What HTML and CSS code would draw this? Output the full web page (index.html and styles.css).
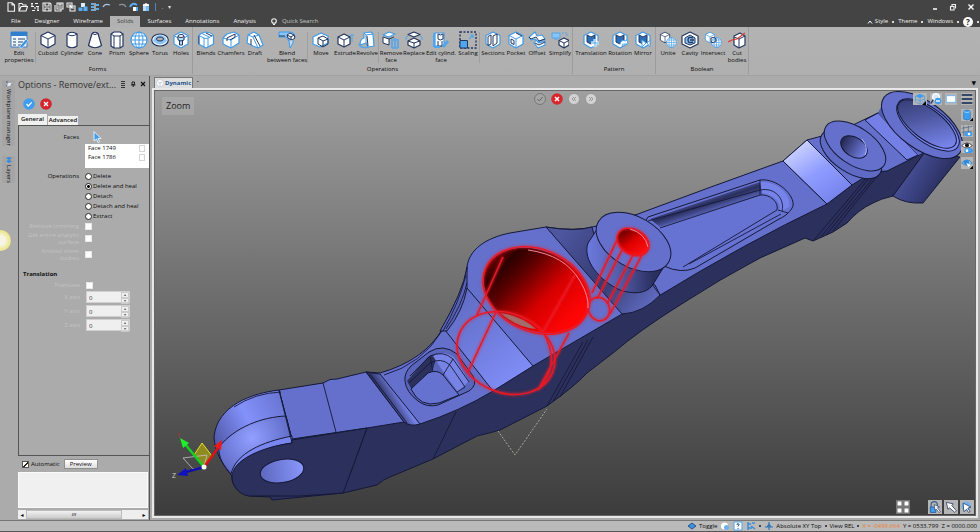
FILE: index.html
```html
<!DOCTYPE html>
<html lang="en">
<head>
<meta charset="utf-8">
<title>Solids - Remove/extract faces</title>
<link rel="stylesheet" href="styles.css">
</head>
<body>
<svg class="sprite" aria-hidden="true">
  <symbol id="cube" viewBox="0 0 18 18"><path class="w" d="M9 1 16 4.500V13L9 17 2 13V4.500Z"/><path class="l" d="M2 4.500 9 8 16 4.500M9 8V17"/></symbol>
  <symbol id="globe" viewBox="0 0 18 18"><circle class="w" cx="9" cy="9" r="8"/><ellipse class="l" cx="9" cy="9" rx="4" ry="8"/><path class="l" d="M1 9H17M2 5H16M2 13H16M9 1V17"/></symbol>
  <symbol id="pin" viewBox="0 0 18 18"><path d="M4 4 14 9 10 10.500 13 15 11 16 8.500 12 5 15Z" fill="#fff" stroke="#23365f"/></symbol>
</svg>

<header class="titlebar">
  <nav class="quick" aria-label="Quick access">
    <button aria-label="New"><svg viewBox="0 0 10 10"><path d="M2 .700H6L8.500 3V9.300H2ZM6 .700V3H8.500" class="q"/></svg></button>
    <button aria-label="Open"><svg viewBox="0 0 10 10"><path d="M1 9V1.500H4L5 3H8V4.500M1 9 3 4.500H9.500L8 9Z" class="q"/></svg></button>
    <button aria-label="Import"><svg viewBox="0 0 10 10"><path d="M1 1.500H3M5 1.500H8M1 4.500H4M6 4.500H9M2 8.500H5M7 8.500H9M2 2V4M8 5V8M5 5V7" class="q"/></svg></button>
    <button aria-label="Save"><svg viewBox="0 0 10 10"><path d="M1 1H8L9 2V9H1ZM3 1V4H7V1M3 9V6H7V9" class="q"/></svg></button>
    <button aria-label="Save all"><svg viewBox="0 0 10 10"><path d="M3 1H9V7H3ZM1 3V9H7V7M5 1V3H7V1M4 5H8" class="q"/></svg></button>
    <button aria-label="Export"><svg viewBox="0 0 10 10"><path d="M1 1H6V5H1ZM4 4H9V9H4ZM2 3H5M5 6H8" class="q"/></svg></button>
    <button aria-label="Assembly"><svg viewBox="0 0 10 10"><path d="M3 1H7V5H3Z" fill="#dbeeff"/><path d="M.500 5.500H4.500V9H.500ZM5.500 4.500H9.500V9H5.500Z" fill="#58adf3"/></svg></button>
    <button aria-label="Structure"><svg viewBox="0 0 10 10"><path d="M1 2H4M1 5H4M1 8H4" stroke="#58adf3" stroke-width="2"/><path d="M5 1V9" stroke="#fff"/><path d="M6 3H9M6 7H9" stroke="#58adf3" stroke-width="2"/></svg></button>
    <button aria-label="Undo"><svg viewBox="0 0 10 10"><path d="M1 5Q3 1 8 3" class="qb"/></svg></button>
    <button class="gap" aria-label="Redo"><svg viewBox="0 0 10 10"><path d="M2 3Q7 1 9 5" class="qd"/></svg></button>
    <button aria-label="Rotate view"><svg viewBox="0 0 10 10"><path d="M1 5Q3 0 8 3" stroke="#58adf3" stroke-width="2" fill="none"/><path d="M4 5H9V9H4Z" fill="#fff"/><path d="M7 5H9V9H7Z" fill="#58adf3"/></svg></button>
    <button aria-label="Shade"><svg viewBox="0 0 10 10"><path d="M2 2H8V9H2Z" fill="#b9dcfa"/><path d="M2 3 5 1 8 3V4H2Z" fill="#fff"/><path d="M5 4H8V9H5Z" fill="#7bbcf3"/></svg></button>
    <span class="bar"></span>
    <button class="tiny" aria-label="More">.</button>
    <button class="tiny" aria-label="Customize">▾</button>
  </nav>
  <div class="winbtns">
    <button aria-label="Minimize"><svg viewBox="0 0 8 8"><path d="M2 6H6" stroke="#fff" stroke-width="1.500"/></svg></button>
    <button aria-label="Restore"><svg viewBox="0 0 8 8"><path d="M1.500 3.500H5V7H1.500ZM3 3V1.500H6.500V5H6" class="q"/></svg></button>
    <button aria-label="Close"><svg viewBox="0 0 8 8"><path d="M1.500 1.500 6.500 6.500M6.500 1.500 1.500 6.500" stroke="#fff" stroke-width="1.400"/></svg></button>
  </div>
</header>

<nav class="tabs" aria-label="Ribbon tabs">
  <button>File</button><button>Designer</button><button>Wireframe</button><button class="on">Solids</button><button>Surfaces</button><button>Annotations</button><button>Analysis</button>
  <label class="search"><svg viewBox="0 0 8 8"><circle cx="4" cy="3" r="2.300" class="q"/><path d="M3 6.500H5" class="q"/></svg><input type="text" aria-label="Quick Search" placeholder="Quick Search"></label>
  <div class="right">
    <button><svg viewBox="0 0 6 6"><path d="M1 4.500 3 2 5 4.500" stroke="#fff" fill="none"/></svg> Style</button>
    <i class="dd"></i><button>Theme</button><i class="dd"></i><button>Windows</button><i class="dd"></i>
    <button class="help" aria-label="Help">?</button><i class="dd"></i>
  </div>
</nav>

<section class="ribbon" aria-label="Solids">
  <div class="group">
    <div class="tools">
      <button class="b32"><svg viewBox="0 0 18 18"><path d="M1 1H17V16H1Z" fill="#eef6fd" stroke="#3d7fbd"/><path d="M1 1H17V5H1Z" fill="#2f7fcf"/><path d="M3 8H6M3 11H6M3 14H6M8 8H15M8 11H13M8 14H11" stroke="#27406d" stroke-width="1.200"/><path d="M10 15 16 8 18 10 12 17 10 17Z" fill="#3b93e0" stroke="#fff" stroke-width=".500"/></svg>Edit<br>properties</button>
      <hr>
      <button class="b24"><svg class="n"><use href="#cube"/></svg>Cuboid</button>
      <button class="b24"><svg class="n" viewBox="0 0 18 18"><path class="w" d="M4 3V15Q9 18.500 14 15V3Q9-.500 4 3"/><path class="l" d="M4 3Q9 6.500 14 3"/></svg>Cylinder</button>
      <button class="b22"><svg class="n" viewBox="0 0 18 18"><path class="w" d="M6 2.500 2.500 14.500Q9 19 15.500 14.500L12 2.500Q9 0 6 2.500"/><path class="l" d="M6 2.500Q9 4.500 12 2.500"/></svg>Cone</button>
      <button class="b22"><svg class="n" viewBox="0 0 18 18"><path class="w" d="M3 3 6 1H12L15 3V15L12 17H6L3 15Z"/><path class="l" d="M3 3 6 5H12L15 3M6 5V17M12 5V17"/></svg>Prism</button>
      <button class="b22"><svg class="c"><use href="#globe"/></svg>Sphere</button>
      <button class="b20"><svg class="n" viewBox="0 0 18 18"><ellipse class="w" cx="9" cy="9" rx="8.300" ry="6"/><path d="M2 10Q9 17 16 10L14 6Q9 2 4 6Z" fill="#8ac4f5"/><ellipse cx="9" cy="8" rx="3.500" ry="2" fill="#b0b0b0" stroke="#23365f"/></svg>Torus</button>
      <button class="b22"><svg class="c" viewBox="0 0 18 18"><path class="w" d="M9 1 16 4.500V13L9 17 2 13V4.500Z"/><path class="l" d="M2 4.500 6 7M16 4.500 12 7"/><path d="M6 5V9Q9 11 12 9V5M7.500 10V14H10.500V10" fill="#b9dcfa" stroke="#23365f"/><ellipse cx="9" cy="5" rx="3" ry="1.500" fill="#fff" stroke="#23365f"/></svg>Holes</button>
    </div>
    <h2>Forms</h2>
  </div>
  <div class="group">
    <div class="tools">
      <button class="b26"><svg class="c" viewBox="0 0 18 18"><path class="w" d="M9 1Q16 2 16.500 5V13L9 17 1.500 13V5Q3 2 9 1Z"/><path class="l" d="M2 4.500 7 7Q9 8 11 7L16 4.500M7 7V16M11 7V16M5 2.500 12 6"/><path class="d" d="M2 5V13M9 2 15 5"/></svg>Blends</button>
      <button class="b24"><svg class="c" viewBox="0 0 18 18"><path class="w" d="M5 3 12 1 17 4V12L9 17 1 13V7Z"/><path class="l" d="M1 7 9 9 17 4M9 9V17"/><path class="d" d="M5 7 13 3M5 7V10M13 3V6L8 9"/></svg>Chamfers</button>
      <button class="b24"><svg class="c" viewBox="0 0 18 18"><path class="w" d="M2 4 8 1 13 4 17 14 12 17 7 15 1 12Z"/><path class="l" d="M2 4 7 6 13 4M7 6 12 17"/><path class="d" d="M5 8V14M8 4 14 15"/></svg>Draft</button>
      <button class="b40"><svg class="c" viewBox="0 0 18 18"><path d="M1 1H11Q17 1 17 6L11 7V10L8 6H1Z" fill="#8ac4f5" stroke="#419ae6"/><path class="n2" d="M9 4 12 2 16 4 17 7 14 9 10 7Z"/><path class="d" d="M9 4 13 6 16 4M13 6V9M1 5H7"/><path d="M11 10 12 17 15 12V9" fill="#b9dcfa" stroke="#419ae6"/></svg>Blend<br>between faces</button>
      <hr>
      <button class="b26"><svg class="c" viewBox="0 0 18 18"><path class="w" d="M1 6 9 2 16 5V12L8 16 1 13Z"/><path class="d" d="M6 7 11 5 16 8V13L11 16 6 13ZM6 7 11 10 16 8M11 10V16"/></svg>Move</button>
      <button class="b22"><svg class="n" viewBox="0 0 18 18"><path class="w" d="M8 3 14 6V13L8 16 2 13V6Z"/><path class="l" d="M2 6 8 9 14 6M8 9V16"/><path d="M16 3V11M14 5 16 3 18 5" stroke="#4fa6ee" fill="none"/></svg>Extrude</button>
      <button class="b22"><svg class="c" viewBox="0 0 18 18"><path class="w" d="M6 2 13 1 15 3 16 15 10 16 8 12 2 14Q2 8 6 7Z"/><path class="l" d="M6 2 8 4 15 3M8 4V12"/><path class="d" d="M9 5 10 15"/><path d="M1 13Q3 18 10 16" stroke="#4fa6ee" stroke-width="1.500" fill="none"/></svg>Revolve</button>
      <hr>
      <button class="b24"><svg class="c" viewBox="0 0 18 18"><path class="w" d="M1 4 7 1 13 3 7 6Z"/><path class="n2" d="M1 6 7 8V14L1 12ZM7 8 12 6"/><path d="M9 9H17M13 7V8M10 10V17M13 10V17M16 10V17M10 17H16" stroke="#4fa6ee" stroke-width="1.600"/></svg>Remove<br>face</button>
      <button class="b22"><svg class="n" viewBox="0 0 18 18"><path class="w" d="M3 3.500 9 1 15 3.500 9 6Z"/><path class="w" d="M3 10 9 7 15 10V14L9 17 3 14Z"/><path class="l" d="M3 10 9 12 15 10M9 12V17"/><path d="M1 9Q0 5 3 5M17 9Q18 5 15 5" stroke="#4fa6ee" fill="none"/></svg>Replace</button>
      <button class="b32"><svg class="c" viewBox="0 0 18 18"><path class="w" d="M3 2H12V15H3Z"/><path class="n2" d="M6 3Q9 5 11 3V8Q8 10 6 8ZM6 10V15H10V10"/><path d="M10 15 15 9 17 11 12 17Z" fill="#4fa6ee"/><path d="M2 2V16M2 16H8" stroke="#4fa6ee" stroke-width="2"/></svg>Edit cylind.<br>face</button>
      <button class="b22"><svg viewBox="0 0 18 18"><path d="M1 1H17V17H1Z" fill="none" stroke="#23365f" stroke-width="1.400" stroke-dasharray="2 1.500"/><path d="M1 9.500H8.500V17H1Z" fill="#4fa6ee" stroke="#23365f"/><path d="M10 8 14 4M11 4H14V7" stroke="#4fa6ee" stroke-width="1.200" fill="none"/></svg>Scaling</button>
      <hr>
      <button class="b26"><svg class="c" viewBox="0 0 18 18"><path class="w" d="M9 1 16 4.500V13L9 17 2 13V4.500Z"/><path class="d" d="M4 5.500 7 4V13L4 14.500ZM9 5 13 3V12L9 15Z"/></svg>Sections</button>
      <button class="b20"><svg class="c" viewBox="0 0 18 18"><use href="#cube" width="18" height="18"/><path class="d" d="M4 8 7 9.500V13.500L4 12ZM9 2 15 5"/></svg>Pocket</button>
      <button class="b22"><svg class="c" viewBox="0 0 18 18"><path class="w" d="M1 6 7 1 9 5 14 4 17 8 10 11 7 8 3 9Z"/><path class="w" d="M6 12 8 9 11 12 17 10V14L10 17Z"/><path class="d" d="M1 6 3 8 8 6 11 10 17 8M7 12 11 14 17 11"/></svg>Offset</button>
      <button class="b24"><svg class="n" viewBox="0 0 18 18"><path d="M1 2H9V7H1ZM3 8H7" fill="#8ac4f5" stroke="#4fa6ee"/><path d="M11 2H16V6" stroke="#4fa6ee" stroke-dasharray="2 1" fill="none"/><path class="w" d="M13 7 18 9.500V14L13 17 8 14V9.500Z"/><path class="l" d="M8 9.500 13 12 18 9.500M13 12V17"/></svg>Simplify</button>
    </div>
    <h2>Operations</h2>
  </div>
  <div class="group">
    <div class="tools">
      <button class="b36"><svg class="c" viewBox="0 0 18 18"><path class="w" d="M9 1 16 4.500V13L9 17 2 13V4.500Z"/><path d="M5 4 9 6 13 4V11L9 13 5 11Z" fill="#2d6fb8" stroke="#23365f"/><path d="M13 8V16M9 12H17" stroke="#fff" stroke-width="3"/><path d="M13 8V16M9 12H17" stroke="#4fa6ee" stroke-width="1"/></svg>Translation</button>
      <button class="b22"><svg class="c" viewBox="0 0 18 18"><path class="w" d="M9 1 16 4.500V13L9 17 2 13V4.500Z"/><path d="M5 4 9 6 13 4V11L9 13 5 11Z" fill="#2d6fb8" stroke="#23365f"/><path d="M9 13Q10 8 15 10L16 8 17 13 13 13Q11 12 11 16" fill="#fff" stroke="#4fa6ee"/></svg>Rotation</button>
      <button class="b24"><svg class="c" viewBox="0 0 18 18"><path class="w" d="M9 1 16 4.500V13L9 17 2 13V4.500Z"/><path d="M5 4 9 6 13 4V11L9 13 5 11Z" fill="#2d6fb8" stroke="#23365f"/><path d="M8 9V16L12 12ZM16 9V16L13 12Z" fill="#fff" stroke="#4fa6ee"/></svg>Mirror</button>
    </div>
    <h2>Pattern</h2>
  </div>
  <div class="group">
    <div class="tools">
      <button class="b24"><svg class="n" viewBox="0 0 18 18"><use href="#cube" width="12" height="13"/><use class="c" href="#globe" x="7" y="6" width="11" height="11"/></svg>Unite</button>
      <button class="b20"><svg class="n" viewBox="0 0 18 18"><path class="w" d="M9 1 17 5V13L9 17 1 13V5Z"/><path d="M9 4 14 7V12L9 14 4 12V7Z" fill="#8ac4f5" stroke="#23365f"/><path d="M12 7Q7 5 7 9T12 11M9 9H13" stroke="#23365f" stroke-width="1.400" fill="none"/></svg>Cavity</button>
      <button class="b26"><svg class="c" viewBox="0 0 18 18"><use href="#cube" width="12" height="13"/><use href="#globe" x="7" y="6" width="11" height="11"/><path class="d" d="M7 7Q12 5 12 10Q9 13 7 11Z"/></svg>Intersect</button>
      <button class="b22"><svg class="n" viewBox="0 0 18 18"><path class="w" d="M6 5 12 2 17 5V14L11 17 6 14Z"/><path class="l" d="M6 6 11 8 17 5M11 8V17"/><path d="M0 11 4 9 9 8 17 2" stroke="#e0352f" stroke-width="1.200" fill="none"/></svg>Cut<br>bodies</button>
    </div>
    <h2>Boolean</h2>
  </div>
</section>

<main class="work">
  <aside class="rail">
    <button><svg viewBox="0 0 8 8"><path d="M1 2H3M1 6 4 4 7 4" stroke="#46618c" fill="none"/><path d="M3 3H7L5 6H2Z" fill="#dfe9f3"/></svg><span>Workplane manager</span></button>
    <button><svg viewBox="0 0 8 8"><path d="M1 2 4 1 7 2 4 4ZM1 5 4 4 7 5 4 7Z" fill="#2f8be0"/></svg><span>Layers</span></button>
    <i class="ball"></i>
  </aside>

  <aside class="panel">
    <div class="phead"><h1>Options - Remove/ext...</h1>
      <button aria-label="Menu"><svg viewBox="0 0 8 8"><path d="M2 1.500H6M2 3.500H6M2 5.500H6M2 7.500H6" stroke="#333"/></svg></button>
      <button aria-label="Pin"><svg viewBox="0 0 8 8"><path d="M3 2H5.500V4.500H3ZM2 5H6.500M4.200 5V7" stroke="#222" fill="none"/></svg></button>
      <button aria-label="Close"><svg viewBox="0 0 8 8"><path d="M2 2 6 6M6 2 2 6" stroke="#111" stroke-width="1.200"/></svg></button>
    </div>
    <div class="okrow">
      <button aria-label="Apply"><svg viewBox="0 0 12 12"><circle cx="6" cy="6" r="5.800" fill="#3f9df0"/><path d="M3.500 6 5.300 8 8.700 4.300" stroke="#fff" stroke-width="1.200" fill="none"/></svg></button>
      <button aria-label="Cancel"><svg viewBox="0 0 12 12"><circle cx="6" cy="6" r="5.800" fill="#d3252b"/><path d="M4 4 8 8M8 4 4 8" stroke="#fff" stroke-width="1.400"/></svg></button>
    </div>
    <div class="ptabs"><button class="on">General</button><button>Advanced</button></div>
    <form class="pbody">
      <div class="row faces"><span class="lab">Faces</span><svg class="cur" viewBox="0 0 10 12"><path d="M2 .500V10L4.500 8 6 11.500 7.500 10.800 6 7.500H9Z" fill="#3f9df0" stroke="#fff" stroke-width=".800"/></svg></div>
      <ul class="list"><li>Face 1749<i></i></li><li>Face 1786<i></i></li></ul>
      <div class="row ops"><span class="lab">Operations</span>
        <div class="radios">
          <label><input type="radio" name="op">Delete</label>
          <label><input type="radio" name="op" checked>Delete and heal</label>
          <label><input type="radio" name="op">Detach</label>
          <label><input type="radio" name="op">Detach and heal</label>
          <label><input type="radio" name="op">Extract</label>
        </div>
      </div>
      <div class="row dis"><label class="lab" for="c1">Remove trimming</label><input id="c1" type="checkbox" disabled></div>
      <div class="row dis two"><label class="lab" for="c2">Get entire analytic<br>surface</label><input id="c2" type="checkbox" disabled></div>
      <div class="row dis two"><label class="lab" for="c3">Knitted sheet<br>bodies</label><input id="c3" type="checkbox" disabled></div>
      <h3>Translation</h3>
      <div class="row dis tr"><label class="lab" for="c4">Translate</label><input id="c4" type="checkbox" disabled></div>
      <div class="row dis ax"><label class="lab" for="x">X axis</label><span class="spin"><input id="x" type="text" value="0" disabled><i>▴</i><i>▾</i></span></div>
      <div class="row dis ax"><label class="lab" for="y">Y axis</label><span class="spin"><input id="y" type="text" value="0" disabled><i>▴</i><i>▾</i></span></div>
      <div class="row dis ax"><label class="lab" for="z">Z axis</label><span class="spin"><input id="z" type="text" value="0" disabled><i>▴</i><i>▾</i></span></div>
    </form>
    <div class="auto"><label><input type="checkbox" checked>Automatic</label><button>Preview</button></div>
    <div class="msg"></div>
    <div class="scroll"><span>◂</span><i>ııı</i><b></b><span>▸</span></div>
  </aside>

  <section class="doc">
    <div class="dtabs"><button><svg viewBox="0 0 8 8"><circle cx="4" cy="4" r="3.500" fill="#fff" stroke="#aab6c6" stroke-width=".500"/><path d="M2 3 4 4 6 3M4 4V6.500" stroke="#90a4be" stroke-width=".600" fill="none"/></svg>Dynamic</button><span>▪</span><em>▼</em></div>
    <div class="frame">
      <svg class="model" viewBox="154 90 822 426" preserveAspectRatio="xMidYMid slice" role="img" aria-label="3D part with two highlighted faces">
        <defs>
          <linearGradient id="gLobe" x1="214" y1="440" x2="292" y2="400" gradientUnits="userSpaceOnUse"><stop offset="0" stop-color="#5059a8"/><stop offset=".450" stop-color="#8391fb"/><stop offset="1" stop-color="#6370ca"/></linearGradient>
          <radialGradient id="gLobe2" cx="252" cy="438" r="42" gradientUnits="userSpaceOnUse"><stop offset="0" stop-color="#929fff"/><stop offset="1" stop-color="#5d69c4"/></radialGradient>
          <linearGradient id="gPatch" x1="800" y1="142" x2="838" y2="200" gradientUnits="userSpaceOnUse"><stop offset="0" stop-color="#cdd3ff"/><stop offset=".500" stop-color="#8f9cff"/><stop offset="1" stop-color="#7582ec"/></linearGradient>
          <linearGradient id="gSlope" x1="450" y1="300" x2="520" y2="385" gradientUnits="userSpaceOnUse"><stop offset="0" stop-color="#5f6bc2"/><stop offset="1" stop-color="#828ffa"/></linearGradient>
          <linearGradient id="gBoss" x1="587" y1="0" x2="670" y2="0" gradientUnits="userSpaceOnUse"><stop offset="0" stop-color="#6d7ae0"/><stop offset=".350" stop-color="#5560b0"/><stop offset=".800" stop-color="#2b3060"/><stop offset="1" stop-color="#272b56"/></linearGradient>
          <linearGradient id="gFil" x1="560" y1="235" x2="650" y2="305" gradientUnits="userSpaceOnUse"><stop offset="0" stop-color="#4d569f"/><stop offset=".550" stop-color="#343a70"/><stop offset="1" stop-color="#5e69bd"/></linearGradient>
          <linearGradient id="gRing" x1="900" y1="105" x2="950" y2="145" gradientUnits="userSpaceOnUse"><stop offset="0" stop-color="#343a72"/><stop offset=".400" stop-color="#4d579f"/><stop offset="1" stop-color="#7d8af5"/></linearGradient>
          <linearGradient id="gCyl" x1="902" y1="165" x2="948" y2="192" gradientUnits="userSpaceOnUse"><stop offset="0" stop-color="#4d569e"/><stop offset=".450" stop-color="#3a4180"/><stop offset="1" stop-color="#242850"/></linearGradient>
          <linearGradient id="gHole" x1="841" y1="0" x2="868" y2="0" gradientUnits="userSpaceOnUse"><stop offset="0" stop-color="#252a54"/><stop offset="1" stop-color="#7582e8"/></linearGradient>
          <linearGradient id="gEye" x1="260" y1="0" x2="304" y2="0" gradientUnits="userSpaceOnUse"><stop offset="0" stop-color="#5c67bd"/><stop offset="1" stop-color="#8a97fd"/></linearGradient>
          <linearGradient id="gRed" x1="488" y1="270" x2="580" y2="305" gradientUnits="userSpaceOnUse"><stop offset="0" stop-color="#6a0000"/><stop offset=".120" stop-color="#2c0000"/><stop offset=".300" stop-color="#5a0000"/><stop offset=".650" stop-color="#d60000"/><stop offset="1" stop-color="#ff0505"/></linearGradient>
          <linearGradient id="gRedS" x1="618" y1="235" x2="648" y2="248" gradientUnits="userSpaceOnUse"><stop offset="0" stop-color="#5a0000"/><stop offset=".500" stop-color="#e00000"/><stop offset="1" stop-color="#ff1010"/></linearGradient>
          <linearGradient id="gGroove" x1="385" y1="402" x2="398" y2="394" gradientUnits="userSpaceOnUse"><stop offset="0" stop-color="#262a54"/><stop offset="1" stop-color="#7481e6"/></linearGradient>
          <linearGradient id="gWall" x1="700" y1="196" x2="706" y2="214" gradientUnits="userSpaceOnUse"><stop offset="0" stop-color="#5c68c0"/><stop offset=".500" stop-color="#2a2e5c"/><stop offset="1" stop-color="#5c68c0"/></linearGradient>
          <filter id="soft" x="-20%" y="-20%" width="140%" height="140%"><feGaussianBlur stdDeviation="1"/></filter>
        </defs>

        <!-- side faces -->
        <path class="e" fill="#2c305c" d="M232 477C231 485 240 495 250 496L270 497 272 500 343 493 377 485Q384 479 390 477L433 459 477 436Q490 433 500 430L547 406Q575 386 587 373L613 353Q640 330 680 305 720 279 760 258L805 238 813 241 833 232 847 223Q858 210 873 203 880 199 893 196L925 152 887 160 827 190 660 280 533 350 412 410 292 430Z"/>
        <path class="e" fill="url(#gCyl)" d="M925 152 893 196Q905 204 923 203L960 157Z"/>
        <!-- upper faces -->
        <path class="e" fill="#6470cb" d="M279 390 323 383Q330 378 337 379L366 372 380 373Q425 360 443 328C453 305 467 285 467 267 469 250 485 238 510 233L546 227Q575 232 597 226L638 214Q710 187 783 161L807 140 822 136 853 125 882 111 925 152 887 171 873 172 852 185 827 204Q745 243 657 297 640 312 622 314L533 366 493 391Q460 411 420 424L404 422 367 428 292 439Z"/>
        <path d="M814 240 868 176M820 238 875 171M833 231 882 170M826 235 879 171" class="k"/>
        <!-- fork end -->
        <path class="e" fill="url(#gLobe)" d="M279 390C253 393 217 405 214 437 215 452 221 462 231 475L292 440Z"/>
        <path class="e" fill="url(#gLobe2)" d="M286 416C262 417 235 427 219 447 218 458 224 466 232 475 238 455 262 445 292 440Z"/>
        <path class="e" fill="#7986f0" d="M292 436C262 442 236 453 231 474L233 480C240 458 265 447 292 443Z"/>
        <path class="e" fill="#2c305c" d="M292 443C262 447 232 460 232 477 232 488 242 496 250 496L300 496 343 493 367 428 292 440Z"/>
        <path d="M294 441 366 429 344 492 252 495Z" fill="#2c305c"/>
        <ellipse class="e" cx="282" cy="471" rx="22" ry="11.500" transform="rotate(-10 282 471)" fill="url(#gEye)"/>
        <path class="k" d="M281 392Q255 393 234 407M279 390 292 443M323 383 336 432M367 428 343 493M456 412 433 459M366 372 404 422"/>
        <!-- groove -->
        <path class="e" fill="url(#gGroove)" d="M366 372 372 373 380 374 420 424Q410 427 404 422Z"/>
        <path class="k" d="M370 374 407 423M384 375Q422 364 442 331"/>
        <!-- sloped faces by the hub -->
        <path class="e" fill="url(#gSlope)" d="M467 288 533 366 493 391 445 330Z"/>
        <path class="e" fill="#5964b8" d="M467 267Q463 292 440 331L447 331Q463 311 467 288Z"/>
        <path class="k" d="M466 275Q459 303 443 331M467 283Q462 305 446 329"/>
        <path class="e" fill="url(#gFil)" d="M546 227Q575 232 592 227L604 270 655 285 660 295Q643 313 622 314Z"/>
        <path class="k" d="M583 342 547 406M588 340 553 402M593 337 560 397M651 283 660 295M807 140 852 185M783 161 827 204"/>
        <!-- small pocket -->
        <path class="e" fill="#5964bb" d="M405 381Q404 373 411 366L429 352Q443 343 457 354L473 376Q478 385 469 391L438 405Q427 408 418 401Q406 392 405 381Z"/>
        <path d="M407 381 428 357Q441 350 432 371L412 390Z" fill="#2b305d"/>
        <path d="M433 356Q448 349 456 360L469 381 458 392 444 373Z" fill="#7784e6"/>
        <path class="e" fill="#6672d0" d="M411 389 428 373Q437 369 443 375L459 395 439 403Q420 408 411 389Z"/>
        <path class="k" d="M409 383 430 363Q441 357 450 365L465 387M410 376 430 356Q443 350 453 359L469 382M430 356 433 372M453 359 443 375M465 387 457 392"/>
        <!-- long pocket -->
        <path class="e" fill="#6773d2" d="M648 217 760 180C777 178 795 195 793 206 791 211 786 216 779 219L695 268Q681 274 664 266L640 230Z"/>
        <path fill="url(#gWall)" d="M650 219 760 182 763 195 660 227Z"/>
        <path d="M760 182C777 181 792 195 789 207L780 212Q782 197 762 193Z" fill="#7683e8"/>
        <path class="k" d="M648 221 760 190C775 187 785 199 782 211M660 228 760 195C770 194 779 202 777 210L683 267M760 180V195M778 210 788 213M689 264 781 214"/>
        <!-- light patch and far end -->
        <path class="e" fill="url(#gPatch)" d="M807 140 852 185 827 204 783 161Z"/>
        <path class="e" fill="#7480e6" d="M865 120 878 113 918 155 907 160Z"/>
        <path d="M878 113 884 111 925 152 918 155Z" fill="#5e69c3"/>
        <g transform="rotate(34 851 154)"><ellipse class="e" cx="851" cy="154" rx="35" ry="18" fill="#5f6ac4"/></g>
        <ellipse class="e" cx="855" cy="146" rx="35" ry="18.500" transform="rotate(34 855 146)" fill="#6470cb"/>
        <ellipse class="e" cx="854" cy="147" rx="14.500" ry="9.500" transform="rotate(32 854 147)" fill="url(#gHole)"/>
        <path d="M862 139Q869 148 865 155" fill="none" stroke="#aab4ff"/>
        <path d="M882 105 878 113 926 153 930 150Z" fill="#525cae"/>
        <ellipse class="e" cx="922" cy="125" rx="47" ry="23.500" transform="rotate(36 922 125)" fill="#6470cb"/>
        <ellipse class="e" cx="928" cy="125" rx="37" ry="17" transform="rotate(37 928 125)" fill="#7d8af5"/>
        <ellipse class="e" cx="927" cy="124" rx="35" ry="15" transform="rotate(37 927 124)" fill="url(#gRing)"/>
        <!-- small boss -->
        <path class="e" fill="url(#gBoss)" d="M598 228 588 243C582 260 600 281 620 290 635 295 646 293 652 286L668 260Z"/>
        <ellipse class="e" cx="633.500" cy="242" rx="40.600" ry="25" transform="rotate(30 633.500 242)" fill="#6470cb"/>
        <!-- highlighted faces -->
        <ellipse cx="536.500" cy="290.500" rx="55" ry="40" transform="rotate(23.500 536.500 290.500)" fill="url(#gRed)"/>
        <path d="M500 313Q518 328 536 329 520 315 500 313Z" fill="#a06e6b"/>
        <ellipse cx="633" cy="242" rx="17" ry="12.500" transform="rotate(30 633 242)" fill="url(#gRedS)"/>
        <g fill="none" stroke="#f0202a" stroke-width="3.500" opacity=".5" filter="url(#soft)"><use href="#wires"/></g>
        <g fill="none" stroke="#f01522" stroke-width="1.700"></g>
        <g fill="none" stroke="#e81826" stroke-width="1.500"><use href="#wires"/></g>
        <defs><g id="wires">
          <ellipse cx="536.500" cy="290.500" rx="55.500" ry="41" transform="rotate(23.500 536.500 290.500)"/>
          <ellipse cx="506" cy="353" rx="50.500" ry="39.500" transform="rotate(23.500 506 353)"/>
          <path d="M503 257 477 315M496 312 468 372M575 275 543 332M569 333 538 390M543 332Q562 365 538 390"/>
          <path d="M617 240 592 293M622 250 597 299M633 255 607 304M642 255 610 314"/>
          <ellipse cx="599" cy="309" rx="10.500" ry="12" transform="rotate(-25 599 309)"/>
          <ellipse cx="633" cy="242" rx="17" ry="12.500" transform="rotate(30 633 242)"/></g>
        </defs>
        <path d="M528 250Q565 255 580 281 589 296 588 308M630 229Q645 233 648 247" fill="none" stroke="#f08a9c" stroke-width="1"/>
        <path d="M498 431 515 455 547 409" fill="none" stroke="#b0b0a8" stroke-width=".900" stroke-dasharray="2 1.500"/>
        <!-- axis triad -->
        <path d="M194 455 202 443 212 456 204 467Z" fill="#8f8b20" stroke="#e8e020"/>
        <path d="M204 467 193 469 183 458 207 455Z" fill="none" stroke="#c4c4c4" stroke-width=".800"/>
        <path d="M204 467 185 444" stroke="#12d41f" stroke-width="2.500"/><path d="M180 438 189 443 183 448Z" fill="#20ef2c"/>
        <path d="M204 467 218 448" stroke="#d81414" stroke-width="2.500"/><path d="M222 440 221 450 214 446Z" fill="#ef1818"/>
        <path d="M204 467 186 472" stroke="#1010a8" stroke-width="2.500"/><path d="M177 475 186 468 188 476Z" fill="#1010c0"/>
        <circle cx="204" cy="467" r="2.500" fill="#fff"/>
        <text x="172" y="478" class="ax-z">Z</text><text x="177" y="437" class="ax-y">Y</text>
      </svg>
      <div class="mode">Zoom</div>
      <div class="confirm">
        <button aria-label="OK"><svg viewBox="0 0 12 12"><circle cx="6" cy="6" r="5.500" fill="#a5a5a5" stroke="#777"/><path d="M3.500 6 5.300 8 8.700 4" stroke="#666" fill="none"/></svg></button>
        <button aria-label="Cancel"><svg viewBox="0 0 12 12"><circle cx="6" cy="6" r="5.800" fill="#d8262d"/><path d="M4 4 8 8M8 4 4 8" stroke="#fff" stroke-width="1.400"/></svg></button>
        <button aria-label="Previous"><svg viewBox="0 0 12 12"><circle cx="6" cy="6" r="5.500" fill="#d2d2d2" stroke="#8b8b8b" stroke-width=".600"/><path d="M6 4 4 6 6 8M8 4 6 6 8 8" stroke="#999" fill="none"/></svg></button>
        <button aria-label="Next"><svg viewBox="0 0 12 12"><circle cx="6" cy="6" r="5.500" fill="#d2d2d2" stroke="#8b8b8b" stroke-width=".600"/><path d="M4 4 6 6 4 8M6 4 8 6 6 8" stroke="#999" fill="none"/></svg></button>
      </div>
      <div class="vtop">
        <button class="wide" aria-label="View cube"><svg class="c" viewBox="0 0 18 18"><path d="M9 1 16 4.500 9 8 2 4.500Z" fill="#3f9df0"/><path class="l" d="M2 4.500V13L9 17 16 13V4.500M9 8V17M2 9 9 12 16 9"/><path d="M12 18H18V12Z" fill="#000"/></svg></button>
        <button aria-label="Zoom"><svg viewBox="0 0 18 18"><circle cx="9" cy="6" r="5" fill="#d9e9f7" stroke="#fff" stroke-width="2"/><path d="M5 10 1 16" stroke="#23365f" stroke-width="2"/><circle cx="12" cy="12" r="5" fill="#3f9df0"/><path d="M9 12H15" stroke="#fff" stroke-width="2"/></svg></button>
        <button aria-label="Window"><svg viewBox="0 0 18 18"><path d="M2 4H16V14H2Z" fill="#fff" stroke="#4fa6ee"/></svg></button>
      </div>
      <div class="vside">
        <button aria-label="Menu"><svg viewBox="0 0 18 18"><path d="M1 3H17M1 9H17M1 15H17" stroke="#344767" stroke-width="3"/></svg></button>
        <button aria-label="Shading"><svg viewBox="0 0 18 18"><path d="M4 3Q9 0 14 3V15Q9 18 4 15Z" fill="#3f9df0" stroke="#2474c0"/><path d="M4 4Q9 7 14 4" stroke="#bfe0ff" fill="none"/><path d="M13 18H18V13Z" fill="#000"/></svg></button>
        <button aria-label="Grid"><svg viewBox="0 0 18 18"><path d="M1 5 17 2M1 11 17 9M4 1V17M11 1V13" stroke="#4d5f7d" fill="none"/><rect x="5" y="10" width="12" height="7" rx="3" fill="#3f9df0"/><circle cx="12" cy="13.500" r="2" fill="#fff"/></svg></button>
        <button aria-label="Visibility"><svg viewBox="0 0 18 18"><path d="M1 7Q9-1 17 7 9 14 1 7Z" fill="#fff" stroke="#111"/><circle cx="9" cy="6.500" r="3" fill="#111"/><rect x="5" y="11" width="13" height="7" rx="3" fill="#3f9df0"/><circle cx="9" cy="14.500" r="2" fill="#fff"/></svg></button>
        <button aria-label="View filter"><svg viewBox="0 0 18 18"><path d="M1 9Q9 0 17 9 9 16 1 9Z" fill="#8ac4f5" stroke="#2f6fae"/><circle cx="8" cy="8" r="4" fill="#2f8be0"/><path d="M8 9 15 12 11 15Z" fill="#fff"/><path d="M13 18H18V13Z" fill="#000"/></svg></button>
      </div>
      <div class="vbot">
        <button class="four" aria-label="Four views"><svg viewBox="0 0 18 18"><path d="M2 2H7V7H2ZM11 2H16V7H11ZM2 11H7V16H2ZM11 11H16V16H11Z" fill="#fff"/></svg></button>
        <button aria-label="Lock"><svg viewBox="0 0 18 18"><path d="M3 9H10V16H3Z" fill="#3f9df0" stroke="#23568c"/><path d="M4 9V6Q4 2 8 2T12 6V9" fill="none" stroke="#3a5f8c" stroke-width="1.500"/><path d="M8 6 15 9 12 10 16 15 14 16 11 12 9 13Z" fill="#fff" stroke="#23365f" stroke-width=".800"/></svg></button>
        <button aria-label="Select"><svg viewBox="0 0 18 18"><path d="M3 3 12 5 10 7 16 14 14 16 7 10 5 12Z" fill="#fff" stroke="#23365f"/></svg></button>
        <button aria-label="Select face"><svg viewBox="0 0 18 18"><circle cx="8" cy="8" r="6" fill="#6db2ef"/><use href="#pin" width="18" height="18"/></svg></button>
      </div>
    </div>
  </section>
</main>

<footer class="status">
  <button><svg viewBox="0 0 10 10"><path d="M5 2 9 5 5 8 1 5Z" fill="#3f8fd8" stroke="#1d5a98"/></svg>Toggle</button>
  <button aria-label="Display"><svg viewBox="0 0 10 10"><circle cx="4.500" cy="5" r="3.500" fill="#fff"/><circle cx="6.500" cy="6.500" r="2.500" fill="#6ab0ee"/></svg></button>
  <button aria-label="Query"><svg viewBox="0 0 10 10"><path d="M1 1H9V9H1Z" fill="#fff" stroke="#4fa6ee"/><path d="M4 4Q4 2.500 5 2.500T6 4L5 5.500M5 7V8" stroke="#1d5a98" fill="none"/></svg></button>
  <button aria-label="Tree"><svg viewBox="0 0 10 10"><path d="M2 1V9M2 3H5M2 7H6M6 2H9M5 5 9 8" stroke="#3f8fd8" fill="none" stroke-width="1.500"/></svg></button><i></i>
  <button><svg viewBox="0 0 10 10"><path d="M5 1V9M1 6H9M3 6 5 3 7 6" stroke="#2f74b5" fill="none" stroke-width="1.200"/></svg>Absolute XY Top</button><i></i>
  <button>View REL</button><i></i>
  <span class="hot">X = -0499.664</span><span>Y = 0533.799</span><span>Z = 0000.000</span>
</footer>
</body>
</html>
```
FILE: styles.css
```css
* { box-sizing: border-box; }
html, body { height: 100%; }
body {
  margin: 0;
  display: flex;
  flex-direction: column;
  font: 6px/7px "Open Sans", "Noto Sans", sans-serif;
  color: #0c0c0c;
  background: #ababab;
  overflow: hidden;
}
button { font: inherit; color: inherit; background: none; border: 0; padding: 0; margin: 0; }
svg { display: block; flex: none; }
h1, h2, h3 { margin: 0; font-size: 6px; font-weight: 400; }
.sprite { position: absolute; width: 0; height: 0; }

/* icon strokes */
.w { fill: #fff; stroke: currentColor; stroke-width: 1.2; stroke-linejoin: round; }
.l { fill: none; stroke: currentColor; stroke-width: 1; }
.d { fill: none; stroke: #23365f; stroke-width: 1; }
.n2 { fill: #fff; stroke: #23365f; }
svg.n, use.n { color: #23365f; }
svg.c, use.c { color: #419ae6; }
.q { fill: none; stroke: #f2f2f2; stroke-width: 1.1; }
.qb { fill: none; stroke: #a9c6e2; stroke-width: 1.3; }
.qd { fill: none; stroke: #8c98a5; stroke-width: 1.3; }

/* title bar */
.titlebar { display: flex; justify-content: space-between; background: #444; height: 13px; padding: 1px 5px 0 6px; flex: none; }
.quick { display: flex; align-items: center; gap: 2px; color: #ddd; }
.quick svg { width: 10px; height: 10px; }
.quick .gap { margin-left: 3px; }
.quick .bar { width: 1px; height: 8px; margin: 0 2px; background: #4a86bd; }
.quick .tiny { width: 5px; }
.winbtns { display: flex; gap: 10px; align-items: center; }
.winbtns svg { width: 8px; height: 8px; }

/* ribbon tabs */
.tabs { display: flex; height: 14px; padding: 3px 1px 0 4px; background: #444; color: #f0f0f0; flex: none; font-weight: 500; }
.tabs > button { padding: 0 7px; }
.tabs .on { background: #b1b1b1; color: #444; }
.search { display: flex; align-items: center; gap: 4px; padding-left: 7px; font-weight: 400; }
.search svg { width: 8px; height: 8px; }
.search input { width: 60px; border: 0; padding: 0; background: none; font: inherit; color: #ddd; outline: 0; }
.search input::placeholder { color: #c4c4c4; opacity: 1; }
.right { margin-left: auto; display: flex; align-items: center; gap: 4px; font-weight: 400; }
.right button { display: flex; align-items: center; gap: 2px; }
.right svg { width: 6px; height: 6px; }
.dd { width: 2px; height: 2px; background: #ddd; }
.right .help { width: 10px; height: 10px; border-radius: 50%; background: #fff; color: #222; font-size: 8px; font-weight: 700; justify-content: center; }

/* ribbon */
.ribbon { display: flex; height: 49px; padding: 0 0 1px 3px; background: linear-gradient(#b3b3b3, #afafaf); border-bottom: 1px solid #a2a2a2; flex: none; }
.group { display: flex; flex-direction: column; border-right: 1px solid #9c9c9c; padding-top: 4px; }
.tools { display: flex; flex: 1; }
.tools hr { width: 1px; height: 31px; margin: 1px 0 0; border: 0; background: #9f9f9f; }
.tools button { display: flex; flex-direction: column; align-items: center; white-space: nowrap; line-height: 7px; text-align: center; }
.tools svg { width: 18px; height: 18px; margin-bottom: 1px; }
.group h2 { text-align: center; line-height: 9px; }
.b20 { width: 20px; } .b22 { width: 22px; } .b24 { width: 24px; } .b26 { width: 26px; }
.b32 { width: 32px; } .b36 { width: 36px; } .b40 { width: 40px; }

/* work area */
.work { flex: 1; min-height: 0; display: grid; grid-template-columns: 17px 133px 1fr; }
.rail { position: relative; overflow: hidden; padding-top: 4px; }
.rail button { display: flex; flex-direction: column; align-items: center; gap: 1px; width: 13px; margin: 0 2px 10px 2px; background: #a5a5a5; }
.rail svg { width: 8px; height: 8px; }
.rail span { writing-mode: vertical-rl; white-space: nowrap; }
.ball { position: absolute; left: -10px; top: 154px; width: 21px; height: 21px; border-radius: 50%; background: radial-gradient(#f6f4e4 30%, #efe898 60%, #d9cc60); }

.panel { display: flex; flex-direction: column; border-right: 1px solid #555; padding-left: 1px; min-width: 0; }
.phead { display: flex; align-items: center; height: 16px; gap: 2px; padding-right: 2px; }
.phead h1 { font-size: 9px; flex: 1; white-space: nowrap; color: #333; }
.phead svg { width: 8px; height: 8px; }
.okrow { display: flex; gap: 5px; padding: 6px 0 4px 5px; }
.okrow svg { width: 12px; height: 12px; }
.ptabs { display: flex; align-items: flex-end; gap: 1px; border-bottom: 1px solid #555; height: 12px; }
.ptabs button { background: #f0f0f0; height: 9px; padding: 0 1px; font-weight: 600; }
.ptabs .on { height: 11px; padding: 0 3px; }
.pbody { flex: 1; min-height: 0; border-left: 1px solid #555; border-bottom: 1px solid #555; padding-top: 4px; }
.row { display: flex; }
.lab { width: 60px; text-align: right; margin-right: 6px; flex: none; }
.faces { height: 14px; align-items: center; }
.cur { width: 10px; height: 12px; margin-left: 7px; }
.list { list-style: none; margin: 0 0 3px 66px; padding: 0 3px; height: 24px; background: #fff; }
.list li { display: flex; justify-content: space-between; height: 9px; line-height: 9px; }
.list i { width: 6px; height: 7px; margin: 1px; border: 1px solid #d5d5d5; }
.ops { line-height: 10px; }
.radios { display: flex; flex-direction: column; white-space: nowrap; }
.radios label { display: flex; align-items: center; gap: 1px; height: 10px; }
input[type=radio], input[type=checkbox] { appearance: none; margin: 0; width: 7px; height: 7px; background: #fff; border: 1px solid #2a2a2a; flex: none; }
input[type=radio] { border-radius: 50%; }
input[type=radio]:checked { background: radial-gradient(#000 35%, #fff 45%); }
.auto input:checked { background: linear-gradient(135deg, transparent 45%, #222 45% 60%, transparent 60%), #fff; border-color: #555; }
.dis { color: #c2c2c2; margin-top: 2px; }
.dis input[type=checkbox] { border-color: #e8e8e8; }
.dis .lab { line-height: 7px; }
.two { height: 15px; align-items: center; margin-top: 1px; }
.pbody h3 { font-weight: 700; margin: 7px 0 3px 4px; line-height: 10px; color: #111; }
.tr { padding-left: 1px; }
.ax { padding-left: 1px; height: 12px; align-items: center; margin-top: 2px; }
.spin { display: grid; grid-template-columns: 1fr 8px; width: 44px; height: 12px; border: 1px solid #d0d0d0; background: #efefef; color: #555; }
.spin input { grid-row: span 2; width: 100%; min-width: 0; border: 0; background: none; font: inherit; color: #333; padding: 0 2px; }
.spin i { font: 4px/4px "DejaVu Sans", sans-serif; text-align: center; border: 1px solid #ccc; }
.auto { display: flex; align-items: center; gap: 4px; height: 16px; padding-left: 4px; }
.auto label { display: flex; align-items: center; gap: 2px; }
.auto button { width: 34px; height: 10px; background: linear-gradient(#fff, #ddd); border: 1px solid #909090; }
.msg { height: 36px; background: #f0f0f0; border: 1px solid #fafafa; margin-right: 1px; }
.scroll { display: grid; grid-template-columns: 8px 96px 1fr 8px; height: 9px; margin: 2px 1px 1px 0; background: #eee; line-height: 9px; text-align: center; }
.scroll span { font: 6px/9px "DejaVu Sans", sans-serif; }
.scroll i { background: linear-gradient(#f2f2f2, #ccc); border: 1px solid #bbb; line-height: 6px; }

/* document */
.doc { display: flex; flex-direction: column; min-width: 0; padding: 0 2px 2px 2px; }
.dtabs { display: flex; align-items: flex-end; height: 12px; padding-left: 2px; }
.dtabs button { display: flex; align-items: center; gap: 1px; height: 11px; padding: 0 1px; background: #dedede; border: 1px solid #777; border-bottom: 0; color: #24518a; font-weight: 700; }
.dtabs svg { width: 8px; height: 8px; }
.dtabs span { margin: 0 4px 3px; font-size: 4px; }
.dtabs em { margin: 0 2px 2px auto; font: 6px/7px "DejaVu Sans", sans-serif; }
.frame { position: relative; flex: 1; min-height: 0; overflow: hidden; border: 2px solid #e8e8e8; outline: 1px solid #666; outline-offset: -3px; background: linear-gradient(#9f9f9f, #6c6c6c 50%, #3c3c3c); }
.model { width: 100%; height: 100%; }
.e { stroke: #151938; stroke-width: 1; stroke-linejoin: round; }
.k { fill: none; stroke: #151938; stroke-width: .9; }
.ax-z { font: 7px "Open Sans", sans-serif; fill: #ccc; }
.ax-y { font: 6px "Open Sans", sans-serif; fill: #b03030; }
.mode { position: absolute; left: 8px; top: 7px; padding: 4px 4px; font-size: 9px; line-height: 10px; background: rgba(190, 190, 190, .35); color: #222; }
.confirm { position: absolute; left: 380px; top: 3px; display: flex; gap: 5px; }
.confirm svg { width: 12px; height: 12px; }
.vtop { position: absolute; right: 19px; top: 3px; display: flex; gap: 3px; }
.vside { position: absolute; right: 3px; top: 3px; display: flex; flex-direction: column; gap: 4px; }
.vbot { position: absolute; right: 2px; bottom: 2px; display: flex; gap: 2px; }
.vtop button, .vside button, .vbot button { background: #b5b5b5; }
.vtop svg, .vside svg { width: 12px; height: 12px; }
.vtop .wide svg { width: 14px; }
.vbot svg { width: 14px; height: 14px; }
.vbot .four { margin-right: 16px; background: #777; }

/* status bar */
.status { display: flex; align-items: center; justify-content: flex-end; gap: 3px; height: 12px; padding-right: 3px; flex: none; background: #bababa; border-top: 1px solid #777; border-bottom: 1px solid #555; white-space: nowrap; }
.status button { display: flex; align-items: center; gap: 2px; }
.status svg { width: 10px; height: 10px; }
.status i { width: 2px; height: 2px; background: #444; }
.status .hot { color: #ee7d33; }
```
